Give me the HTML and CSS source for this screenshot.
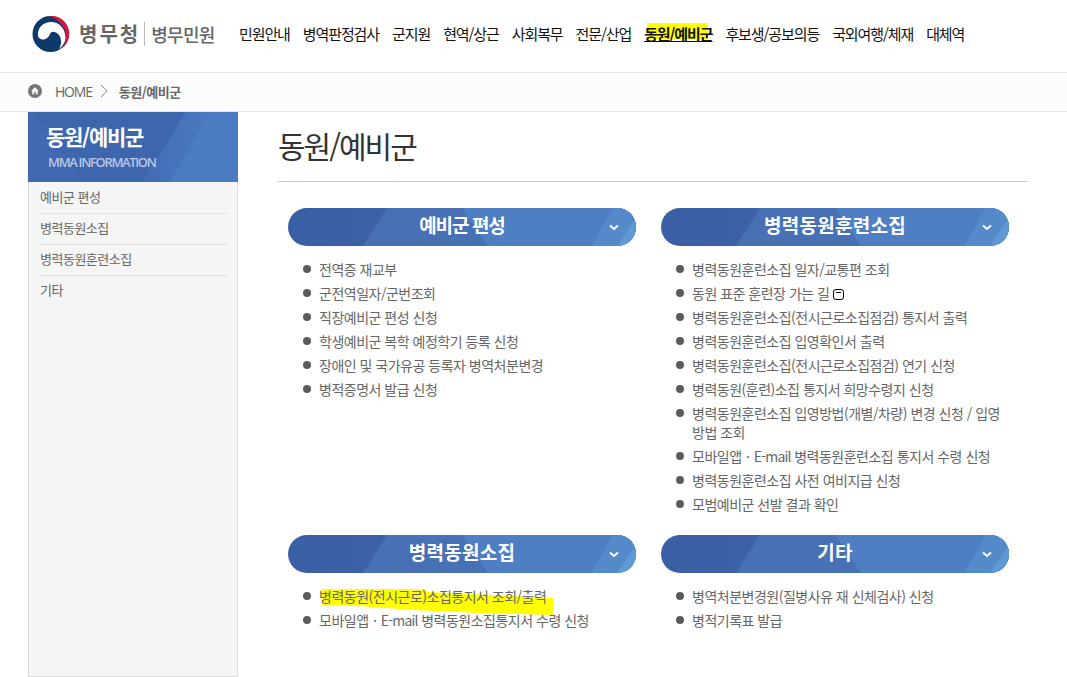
FILE: index.html
```html
<!DOCTYPE html>
<html lang="ko">
<head>
<meta charset="utf-8">
<title>동원/예비군</title>
<link rel="stylesheet" href="styles.css">
</head>
<body>
<svg class="defs" width="0" height="0" aria-hidden="true">
  <defs>
    <linearGradient id="pillBase" x1="0" x2="1" y1="0" y2="0">
      <stop offset="0" stop-color="#3b5fa4"/>
      <stop offset="1" stop-color="#4267ad"/>
    </linearGradient>
    <symbol id="pillArt" viewBox="0 0 348 38" preserveAspectRatio="none">
      <rect width="348" height="38" fill="url(#pillBase)"/>
      <polygon points="99,0 348,0 348,38 75,38" fill="#4871b5"/>
      <polygon points="174,0 348,0 348,38 200,38" fill="#4e7fc2"/>
      <polygon points="325,0 348,0 348,38 303,38" fill="#558aca"/>
      <polygon points="348,10 348,38 329,38" fill="#5f9ad4"/>
    </symbol>
  </defs>
</svg>

<header class="site-header">
  <a class="logo" href="#">
    <svg class="logo-mark" viewBox="0 0 38 36" width="38" height="36" aria-hidden="true">
      <circle cx="18.500" cy="18" r="18" fill="#0d3a6b"/>
      <path d="M6 20C5 11 12 6 19 6c8 0 14 6 14.500 15 0 5-2.500 9-6.500 12 3-5 3-11-1-15-3-3-7-3-8 0-1 3-4 5.500-7 5.500-2.500 0-4.500-1.500-5-3.500Z" fill="#fff"/>
      <path d="M17 0A18 18 0 0 1 29 33c4-4 5.500-9 5-14C33 10 26 3 17 0Z" fill="#d2173f"/>
    </svg>
    <span class="logo-org">병무청</span>
    <span class="logo-sub">병무민원</span>
  </a>
  <nav class="gnb">
    <a href="#">민원안내</a>
    <a href="#">병역판정검사</a>
    <a href="#">군지원</a>
    <a href="#">현역/상근</a>
    <a href="#">사회복무</a>
    <a href="#">전문/산업</a>
    <a href="#" class="active">동원/예비군</a>
    <a href="#">후보생/공보의등</a>
    <a href="#">국외여행/체재</a>
    <a href="#">대체역</a>
  </nav>
</header>

<div class="breadcrumb">
  <svg class="home" viewBox="0 0 14 14" width="14" height="14" aria-hidden="true">
    <circle cx="7" cy="7" r="7" fill="#757575"/>
    <path d="M7 3.200 3.300 6.800h1v3.500h1.900V8h1.600v2.300h1.900V6.800h1Z" fill="#fff"/>
  </svg>
  <span class="crumb-home">HOME</span>
  <svg class="crumb-sep" viewBox="0 0 8 14" width="8" height="14" aria-hidden="true">
    <path d="M1 1l6 6-6 6" fill="none" stroke="#888" stroke-width="1"/>
  </svg>
  <strong class="crumb-current">동원/예비군</strong>
</div>

<div class="layout">
  <aside class="sidebar">
    <div class="side-head">
      <svg class="side-art" viewBox="0 0 210 70" preserveAspectRatio="none" aria-hidden="true">
        <defs>
          <linearGradient id="sideGlow" x1="0" x2="1" y1="0" y2="0">
            <stop offset="0" stop-color="#416bb5"/>
            <stop offset="1" stop-color="#4f81c5"/>
          </linearGradient>
        </defs>
        <rect width="210" height="70" fill="#4169b2"/>
        <polygon points="5,0 158,0 115,70 55,70" fill="#3e66ad"/>
        <polygon points="158,0 210,0 210,70 115,70" fill="url(#sideGlow)"/>
        <polygon points="182,0 210,0 210,70 142,70" fill="#4b7bc1"/>
      </svg>
      <h2 class="side-title">동원/예비군</h2>
      <p class="side-sub">MMA INFORMATION</p>
    </div>
    <ul class="side-menu">
      <li><a href="#">예비군 편성</a></li>
      <li><a href="#">병력동원소집</a></li>
      <li><a href="#">병력동원훈련소집</a></li>
      <li><a href="#">기타</a></li>
    </ul>
  </aside>

  <main class="content">
    <h1 class="page-title">동원/예비군</h1>
    <div class="cards">
      <section class="card">
        <h3 class="pill">
          <svg class="pill-art" aria-hidden="true"><use href="#pillArt"/></svg>
          <span class="pill-label pill-label-tight">예비군 편성</span>
          <svg class="pill-chev" viewBox="0 0 10 7" width="10" height="7" aria-hidden="true"><path d="M1 1.500 5 5l4-3.500" fill="none" stroke="#fff" stroke-width="2"/></svg>
        </h3>
        <ul class="links">
          <li>전역증 재교부</li>
          <li>군전역일자/군번조회</li>
          <li>직장예비군 편성 신청</li>
          <li>학생예비군 복학 예정학기 등록 신청</li>
          <li>장애인 및 국가유공 등록자 병역처분변경</li>
          <li>병적증명서 발급 신청</li>
        </ul>
      </section>

      <section class="card">
        <h3 class="pill">
          <svg class="pill-art" aria-hidden="true"><use href="#pillArt"/></svg>
          <span class="pill-label">병력동원훈련소집</span>
          <svg class="pill-chev" viewBox="0 0 10 7" width="10" height="7" aria-hidden="true"><path d="M1 1.500 5 5l4-3.500" fill="none" stroke="#fff" stroke-width="2"/></svg>
        </h3>
        <ul class="links">
          <li>병력동원훈련소집 일자/교통편 조회</li>
          <li>동원 표준 훈련장 가는 길 <svg class="ext" viewBox="0 0 11 11" width="11" height="11" aria-hidden="true"><rect x=".5" y=".5" width="10" height="10" rx="2.500" fill="#fff" stroke="#000"/><path d="M3 3.500h5" stroke="#000"/></svg></li>
          <li>병력동원훈련소집(전시근로소집점검) 통지서 출력</li>
          <li>병력동원훈련소집 입영확인서 출력</li>
          <li>병력동원훈련소집(전시근로소집점검) 연기 신청</li>
          <li>병력동원(훈련)소집 통지서 희망수령지 신청</li>
          <li>병력동원훈련소집 입영방법(개별/차량) 변경 신청 / 입영방법 조회</li>
          <li>모바일앱 <span class="dot">·</span> <span class="latin">E-mail</span> 병력동원훈련소집 통지서 수령 신청</li>
          <li>병력동원훈련소집 사전 여비지급 신청</li>
          <li>모범예비군 선발 결과 확인</li>
        </ul>
      </section>

      <section class="card">
        <h3 class="pill">
          <svg class="pill-art" aria-hidden="true"><use href="#pillArt"/></svg>
          <span class="pill-label">병력동원소집</span>
          <svg class="pill-chev" viewBox="0 0 10 7" width="10" height="7" aria-hidden="true"><path d="M1 1.500 5 5l4-3.500" fill="none" stroke="#fff" stroke-width="2"/></svg>
        </h3>
        <ul class="links">
          <li class="marked">
            <svg class="scribble" viewBox="0 0 234 27" width="234" height="27" aria-hidden="true"><path d="M2 0H106V3L150 5 233 9V26L160 24 93 21 40 17 2 16Z" fill="#ffff00"/></svg>
            <span class="marked-text">병력동원(전시근로)소집통지서 조회/출력</span>
          </li>
          <li>모바일앱 <span class="dot">·</span> <span class="latin">E-mail</span> 병력동원소집통지서 수령 신청</li>
        </ul>
      </section>

      <section class="card">
        <h3 class="pill">
          <svg class="pill-art" aria-hidden="true"><use href="#pillArt"/></svg>
          <span class="pill-label">기타</span>
          <svg class="pill-chev" viewBox="0 0 10 7" width="10" height="7" aria-hidden="true"><path d="M1 1.500 5 5l4-3.500" fill="none" stroke="#fff" stroke-width="2"/></svg>
        </h3>
        <ul class="links">
          <li>병역처분변경원(질병사유 재 신체검사) 신청</li>
          <li>병적기록표 발급</li>
        </ul>
      </section>
    </div>
  </main>
</div>
</body>
</html>
```

FILE: styles.css
```css
* { box-sizing: border-box; }
html, body { margin: 0; padding: 0; }
body {
  width: 1067px;
  height: 677px;
  overflow: hidden;
  display: flex;
  flex-direction: column;
  background: #fff;
  color: #666;
  font-family: "Noto Sans CJK KR", "Noto Sans", sans-serif;
}
a { color: inherit; text-decoration: none; }
ul { list-style: none; margin: 0; padding: 0; }
h1, h2, h3, p { margin: 0; }
.defs { display: block; height: 0; }

/* header */
.site-header {
  height: 73px;
  flex: none;
  display: flex;
  align-items: center;
  padding: 0 0 5px 32px;
  border-bottom: 1px solid #e5e5e5;
}
.logo { display: flex; align-items: center; width: 207px; color: #666; }
.logo-mark { flex: none; margin-right: 9px; }
.logo-org {
  font-size: 20px;
  font-weight: 700;
  letter-spacing: 2px;
  line-height: 24px;
  padding-right: 4px;
  border-right: 1px solid #bbb;
  margin-right: 6px;
}
.logo-sub { font-size: 18px; font-weight: 500; letter-spacing: -0.7px; white-space: nowrap; }
.gnb { display: flex; gap: 13px; font-size: 15px; letter-spacing: -1.1px; color: #111; white-space: nowrap; }
.gnb a { line-height: 22px; }
.gnb .active {
  font-weight: 700;
  text-decoration: underline;
  background: linear-gradient(#ff0, #ff0) no-repeat 3px 0 / 61px 16px;
}

/* breadcrumb */
.breadcrumb {
  height: 39px;
  flex: none;
  display: flex;
  align-items: center;
  padding: 0 0 2px 28px;
  background: #fcfcfc;
  border-bottom: 1px solid #e5e5e5;
  font-size: 14px;
  color: #666;
}
.home { flex: none; margin-right: 13px; }
.crumb-home { font-family: "Open Sans", sans-serif; font-weight: 400; letter-spacing: -1.2px; }
.crumb-sep { flex: none; margin: 0 11px 0 8px; }
.crumb-current { font-size: 13px; letter-spacing: -0.5px; color: #666; }

/* layout */
.layout { flex: 1; display: flex; padding: 0 39px 0 28px; min-height: 0; }
.sidebar { width: 210px; flex: none; display: flex; flex-direction: column; }
.side-head {
  position: relative;
  height: 70px;
  flex: none;
  padding: 9px 0 0 18px;
  overflow: hidden;
  background: #3f67b0;
}
.side-art { position: absolute; inset: 0; width: 100%; height: 100%; }
.side-title {
  position: relative;
  font-size: 21px;
  font-weight: 700;
  line-height: 30px;
  letter-spacing: -1.3px;
  color: #fff;
}
.side-sub {
  position: relative;
  margin: 3px 0 0 2px;
  font-family: "Open Sans", sans-serif;
  font-size: 13px;
  font-weight: 600;
  line-height: 16px;
  letter-spacing: -1.35px;
  color: #b9c7e6;
}
.side-menu {
  flex: 1;
  padding: 1px 9px 0;
  background: #f5f5f5;
  border: 1px solid #ddd;
  border-top: 0;
}
.side-menu li {
  height: 31px;
  padding-left: 2px;
  border-bottom: 1px solid #e2e2e2;
  font-size: 13px;
  letter-spacing: -0.5px;
  line-height: 27px;
  color: #666;
}
.side-menu li:last-child { border-bottom: 0; }

/* content */
.content { flex: 1; margin-left: 40px; min-width: 0; }
.page-title {
  height: 70px;
  padding-top: 12px;
  font-size: 30px;
  font-weight: 400;
  line-height: 42px;
  letter-spacing: -2px;
  color: #333;
  border-bottom: 1px solid #ccc;
}
.cards {
  display: grid;
  grid-template-columns: 348px 348px;
  column-gap: 25px;
  padding: 26px 0 0 10px;
}
.pill {
  position: relative;
  height: 38px;
  display: flex;
  align-items: center;
  justify-content: center;
  border-radius: 19px;
  overflow: hidden;
  font-size: 19px;
  font-weight: 700;
  letter-spacing: 0.3px;
  word-spacing: -4px;
  color: #fff;
}
.pill-art { position: absolute; inset: 0; width: 100%; height: 100%; }
.pill-label { position: relative; top: -3px; }
.pill-label-tight { letter-spacing: -1px; word-spacing: -1px; }
.pill-chev { position: absolute; top: 16px; right: 17px; }
.links {
  padding: 11px 5px 19px 31px;
  font-size: 14px;
  letter-spacing: -0.5px;
  line-height: 19px;
  color: #666;
}
.links li { position: relative; padding: 3px 0 2px; }
.links li::before {
  content: "";
  position: absolute;
  left: -16px;
  top: 8px;
  width: 8px;
  height: 8px;
  border-radius: 50%;
  background: #5f5a5a;
}
.dot { margin: 0 1px; }
.latin { letter-spacing: -0.8px; }
.ext { vertical-align: -1px; }
.marked .scribble { position: absolute; left: 1px; top: 5px; }
.marked-text { position: relative; }
```
